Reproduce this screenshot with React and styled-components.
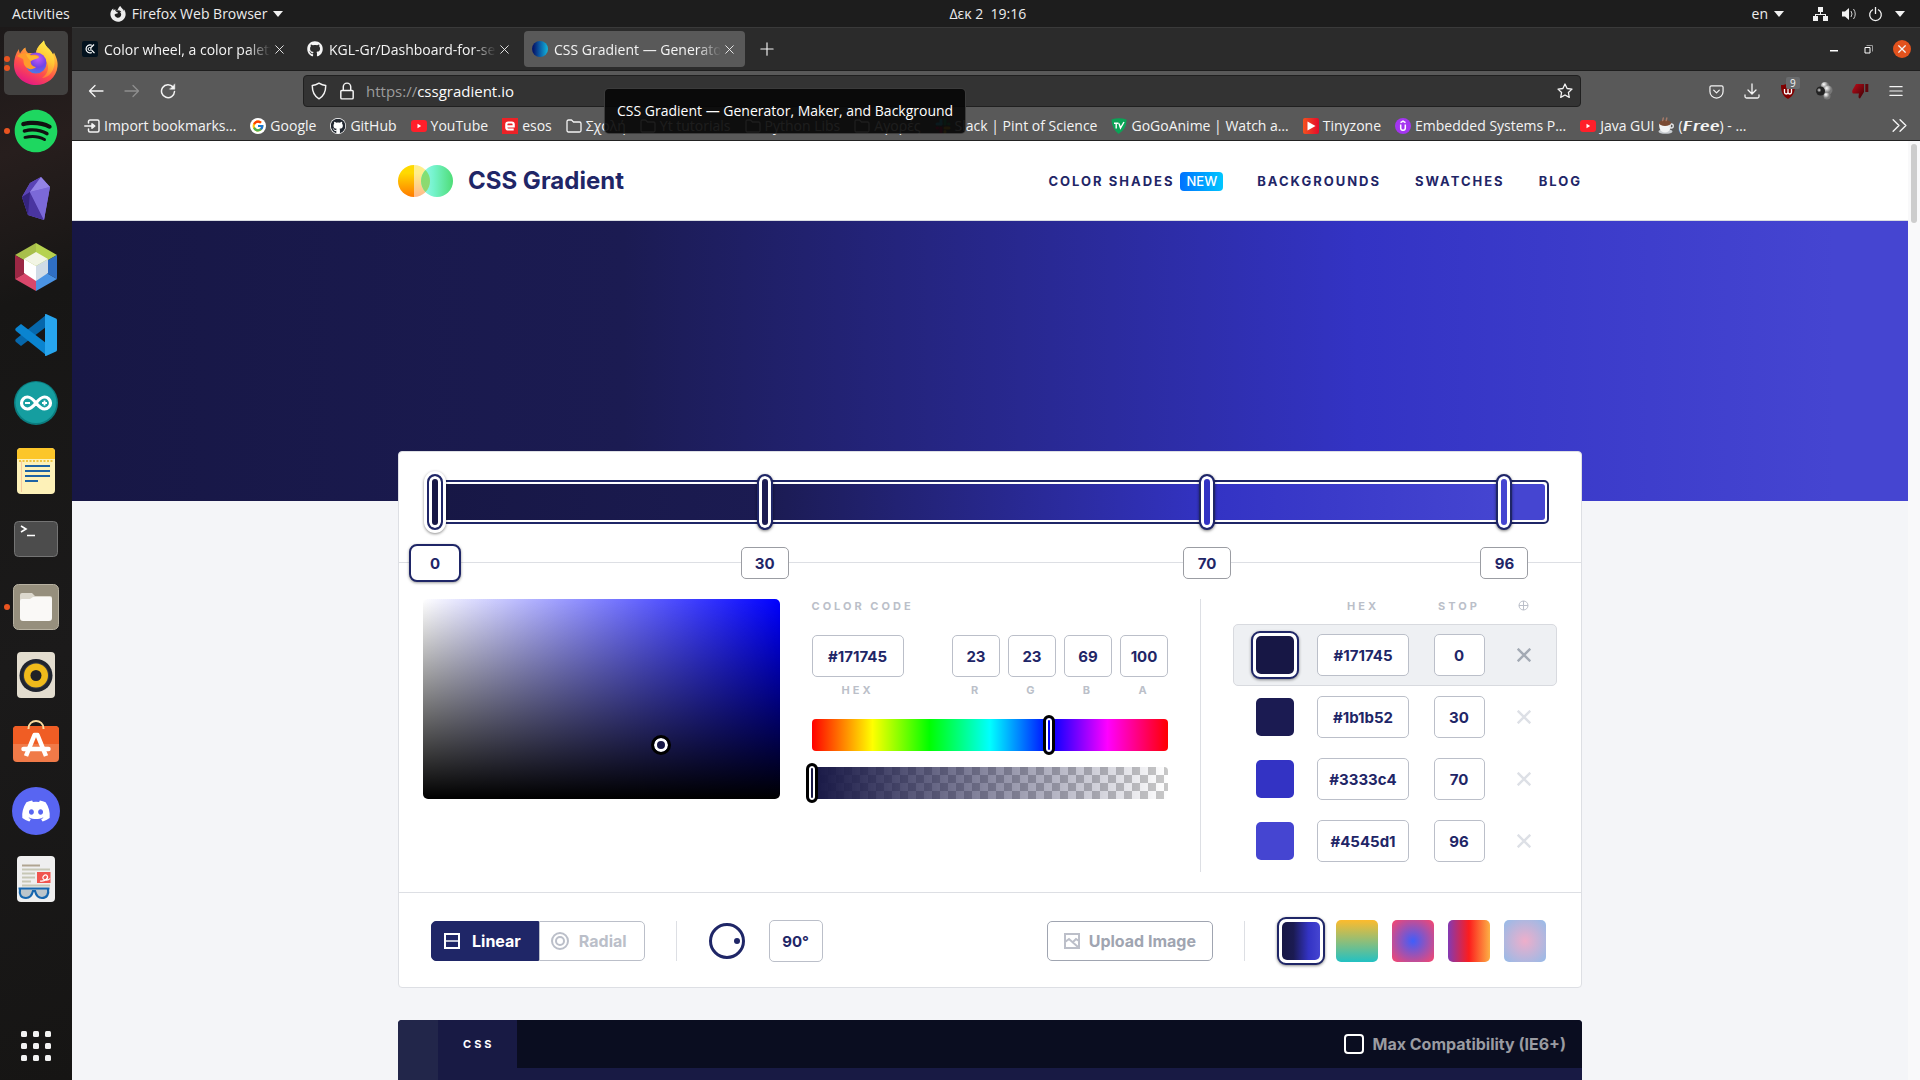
import React from "react";
import styled, { createGlobalStyle, css } from "styled-components";
import { FcGoogle } from "react-icons/fc";
import { FaGithub, FaSpotify, FaDiscord, FaFirefoxBrowser } from "react-icons/fa";

const uiFont = '"Open Sans", "Noto Sans", "DejaVu Sans", sans-serif';
const siteFont = 'Inter, "Liberation Sans", sans-serif';
const navy = "#1f2667";
const line = "#dddfe4";
const field = "#bbbfc9";
const mainGradient = "linear-gradient(90deg, #171745 0%, #1b1b52 30%, #3333c4 70%, #4545d1 96%)";

const Global = createGlobalStyle`
  * { box-sizing: border-box; }
  body { margin: 0; background: #171615; font-family: ${uiFont}; }
  button, input { font: inherit; color: inherit; margin: 0; }
  button { border: 0; padding: 0; background: none; }
  a { color: inherit; text-decoration: none; }
  svg { display: block; flex: none; }
`;

/* ---------- Desktop ---------- */

const Desktop = styled.div`
  height: 100vh;
  display: flex;
  flex-direction: column;
  overflow: hidden;
`;
const TopBar = styled.header`
  flex: none;
  height: 27px;
  display: grid;
  grid-template-columns: calc(50% - 3px) 1fr auto;
  align-items: center;
  padding-right: 15px;
  background: #1d1d1d;
  color: #ececec;
  font-size: 14px;
`;
const BarGroup = styled.div`
  display: flex;
  align-items: center;
  gap: ${(p) => p.$gap}px;
`;
const BarItem = styled.button`
  display: flex;
  align-items: center;
  gap: 6px;
  white-space: pre;
`;
const LeftBar = styled(BarGroup)`
  padding-left: 12px;
`;
const Caret = () => (
  <svg width="10" height="6" viewBox="0 0 10 6"><path d="M0 0h10L5 6z" fill="#f2f2f2" /></svg>
);
const Workspace = styled.div`
  flex: 1;
  min-height: 0;
  display: flex;
`;
const Dock = styled.nav`
  flex: none;
  width: 72px;
  display: flex;
  flex-direction: column;
  align-items: center;
  gap: 4px;
  padding: 4px 0 2px;
  background: linear-gradient(160deg, #1c1919 0%, #271e1d 12%, #171615 26%, #1b1a1a 60%, #161514 100%);
`;
const DockButton = styled.button`
  position: relative;
  width: 64px;
  height: 64px;
  display: flex;
  align-items: center;
  justify-content: center;
  border-radius: 5px;
  background: ${(p) => (p.$active ? "#424140" : "none")};
  &:last-child { margin-top: auto; }
`;
const Dots = styled.span`
  position: absolute;
  left: 0;
  display: flex;
  flex-direction: column;
  gap: 3px;
  i { width: 6px; height: 6px; border-radius: 50%; background: #e95420; }
`;

/* ---------- Browser ---------- */

const Browser = styled.main`
  flex: 1;
  min-width: 0;
  display: flex;
  flex-direction: column;
  background: #595959;
  color: #f4f4f4;
  font-size: 14px;
`;
const TabBar = styled.div`
  flex: none;
  height: 44px;
  display: flex;
  align-items: center;
  gap: 4px;
  padding: 0 9px 0 2px;
  border-top: 1px solid #3a3a3a;
  border-bottom: 1px solid #1e1e1e;
  background: #2b2b2b;
`;
const Tab = styled.div`
  width: 221px;
  height: 36px;
  display: flex;
  align-items: center;
  gap: 6px;
  padding: 0 10px 0 8px;
  border-radius: 4px;
  background: ${(p) => (p.$active ? "#595959" : "none")};
`;
const TabTitle = styled.span`
  flex: 1;
  margin-right: -4px;
  overflow: hidden;
  white-space: nowrap;
  mask-image: linear-gradient(90deg, #000 calc(100% - 24px), transparent);
`;
const PlainButton = styled.button`
  display: flex;
  align-items: center;
  justify-content: center;
  width: ${(p) => p.$w || 36}px;
  height: ${(p) => p.$h || 32}px;
`;
const WindowButtons = styled.div`
  margin-left: auto;
  display: flex;
  align-items: center;
  gap: 16px;
`;
const CloseWindow = styled(PlainButton)`
  border-radius: 50%;
  background: #e2521d;
`;
const Toolbar = styled.div`
  flex: none;
  height: 40px;
  display: flex;
  align-items: center;
  padding: 0 6px;
`;
const AddressBar = styled.label`
  flex: 1;
  height: 32px;
  display: flex;
  align-items: center;
  gap: 10px;
  margin: 0 117px 0 117px;
  padding: 0 7px 0 6px;
  border: 1px solid #202020;
  border-radius: 4px;
  background: #333;
  color: #9c9c9c;
  font-size: 15px;
`;
const Address = styled.input`
  flex: 1;
  min-width: 0;
  margin-left: -10px;
  padding: 0;
  border: 0;
  outline: 0;
  background: none;
  color: #fbfbfb;
`;
const BadgeButton = styled(PlainButton)`
  position: relative;
`;
const Count = styled.span`
  position: absolute;
  top: 2px;
  left: 16px;
  padding: 0 4px;
  border-radius: 2px;
  background: #696b6d;
  font-size: 10px;
  line-height: 12px;
`;
const Bookmarks = styled.div`
  flex: none;
  height: 30px;
  display: flex;
  align-items: center;
  gap: 14px;
  padding: 0 12px;
  border-bottom: 1px solid #222;
  white-space: nowrap;
`;
const Bookmark = styled.a`
  display: flex;
  align-items: center;
  gap: 4px;
`;
const More = styled.button`
  margin-left: auto;
`;
const Tooltip = styled.div`
  position: absolute;
  left: 604px;
  top: 88px;
  z-index: 5;
  padding: 12px;
  border: 1px solid rgba(110, 110, 110, 0.5);
  border-radius: 5px;
  background: rgba(5, 5, 5, 0.9);
  color: #fff;
  font-size: 14px;
  line-height: 20px;
`;

/* ---------- Site ---------- */

const Viewport = styled.div`
  flex: 1;
  min-height: 0;
  display: flex;
  background: #f4f5f8;
  color: ${navy};
  font-family: ${siteFont};
`;
const Site = styled.div`
  flex: 1;
  min-width: 0;
  display: flex;
  flex-direction: column;
  overflow: hidden;
`;
const ScrollTrack = styled.div`
  width: 12px;
  padding: 3px;
  background: #f9f9fa;
`;
const ScrollThumb = styled.div`
  height: 79px;
  border-radius: 3px;
  background: #cdcdcd;
`;
const Container = styled.div`
  width: 100%;
  max-width: 1184px;
  margin: 0 auto;
`;
const SiteHeader = styled.header`
  flex: none;
  border-bottom: 1px solid #d9dce2;
  background: #fff;
`;
const HeaderRow = styled(Container)`
  height: 79px;
  display: flex;
  align-items: center;
  justify-content: space-between;
`;
const Brand = styled.a`
  display: flex;
  align-items: center;
  gap: 15px;
  font-size: 24px;
  font-weight: 700;
`;
const SiteNav = styled.nav`
  display: flex;
  align-items: center;
  gap: 34px;
  padding-top: 1px;
  font-size: 13px;
  font-weight: 700;
  letter-spacing: 2px;
`;
const NavLink = styled.a`
  display: flex;
  align-items: center;
  gap: 6px;
`;
const NewBadge = styled.span`
  padding: 0 6px;
  border-radius: 4px;
  background: linear-gradient(90deg, #0072ff, #00c6ff);
  color: #fff;
  font-weight: 500;
  line-height: 19px;
  letter-spacing: 0;
`;
const Hero = styled.div`
  flex: none;
  height: 280px;
  background: ${mainGradient};
`;
const Card = styled(Container)`
  flex: none;
  margin-top: -50px;
  border: 1px solid ${line};
  border-radius: 4px;
  background: #fff;
`;
const RailSection = styled.section`
  padding: 28px 32px 0;
  border-bottom: 1px solid ${line};
`;
const Rail = styled.div`
  position: relative;
  height: 44px;
  margin-bottom: 38px;
  padding: 2px;
  border: 2px solid ${navy};
  border-radius: 5px;
`;
const RailFill = styled.div`
  height: 36px;
  border-radius: 3px;
  background: ${mainGradient};
`;
const StopRange = styled.input`
  position: absolute;
  top: -8px;
  left: -6px;
  width: calc(100% + 16px);
  height: 56px;
  appearance: none;
  background: none;
  pointer-events: none;
  &::-webkit-slider-thumb {
    appearance: none;
    pointer-events: auto;
    width: 16px;
    height: 56px;
    border: 2px solid ${navy};
    border-radius: 8px;
    background: ${(p) => p.$color};
    box-shadow: inset 0 0 0 3px #fff,
      ${(p) => (p.$active ? "0 0 0 3px #fff, 0 1px 3px 3px rgba(0,0,0,0.45)" : "0 1px 3px rgba(0,0,0,0.5)")};
  }
`;
const StopLabels = styled.div`
  position: relative;
  height: 0;
`;
const fieldStyle = css`
  border: 1px solid ${field};
  border-radius: 5px;
  outline: 0;
  padding: 0;
  background: #fff;
  color: ${navy};
  font-size: 15px;
  font-weight: 700;
  text-align: center;
`;
const StopLabel = styled.input`
  ${fieldStyle}
  position: absolute;
  top: 1px;
  transform: translate(-50%, -50%);
  width: 48px;
  height: 32px;
  border-color: #9b9da3;
  ${(p) => p.$active && css`
    width: 52px;
    height: 38px;
    border: 2px solid ${navy};
    border-radius: 8px;
    box-shadow: 0 1px 3px rgba(0, 0, 0, 0.4);
  `}
`;
const Editor = styled.section`
  display: grid;
  grid-template-columns: 1fr 1fr 357px;
  gap: 32px;
  padding: 36px 24px 20px;
  border-bottom: 1px solid ${line};
`;
const Picker = styled.div`
  position: relative;
  height: 200px;
  border-radius: 5px;
  background: linear-gradient(0deg, #000, transparent), linear-gradient(90deg, #fff, #00f);
`;
const PickerKnob = styled.button`
  position: absolute;
  width: 20px;
  height: 20px;
  transform: translate(-50%, -50%);
  border: 3px solid #000;
  border-radius: 50%;
  background: #171745;
  box-shadow: inset 0 0 0 3px #fff;
`;
const captionStyle = css`
  color: ${field};
  font-size: 11px;
  font-weight: 700;
  line-height: 14px;
  letter-spacing: 3px;
`;
const Caption = styled.h2`
  ${captionStyle}
  margin: 0 0 22px;
`;
const Fields = styled.div`
  display: flex;
  gap: 8px;
  margin-bottom: 22px;
`;
const FieldLabel = styled.label`
  ${captionStyle}
  display: flex;
  flex-direction: column;
  align-items: center;
  gap: 6px;
  &:first-child { margin-right: auto; }
`;
const Field = styled.input`
  ${fieldStyle}
  width: ${(p) => p.$w}px;
  height: 42px;
  letter-spacing: 0;
`;
const Track = styled.div`
  display: flex;
  height: 32px;
  margin-bottom: 16px;
  border-radius: 4px;
  background: ${(p) => p.$fill};
`;
const TrackRange = styled.input`
  flex: none;
  width: calc(100% + 12px);
  height: 40px;
  margin: -4px -6px;
  appearance: none;
  background: none;
  &::-webkit-slider-thumb {
    appearance: none;
    width: 12px;
    height: 40px;
    border: 3px solid #000;
    border-radius: 6px;
    background: ${(p) => p.$color};
    box-shadow: inset 0 0 0 2px #fff;
  }
`;
const StopsPane = styled.div`
  padding-left: 32px;
  border-left: 1px solid ${line};
`;
const StopsTable = styled.table`
  display: block;
  thead, tbody { display: block; }
`;
const StopRow = styled.tr`
  display: grid;
  grid-template-columns: 48px 128px 64px 65px;
  align-items: center;
  justify-items: center;
  height: ${(p) => (p.$head ? 25 : 62)}px;
  padding-left: 17px;
  border: ${(p) => (p.$head ? "0 solid" : "1px solid")};
  border-left-width: 1px;
  border-color: ${(p) => (p.$active ? "#d8dadf" : "transparent")};
  border-radius: 5px;
  background: ${(p) => (p.$active ? "#eef0f3" : "none")};
  th { ${captionStyle} align-self: start; padding: 0; }
  td { display: flex; padding: 0; }
`;
const Swatch = styled.button`
  width: ${(p) => p.$size}px;
  height: ${(p) => p.$size}px;
  border-radius: 5px;
  background: ${(p) => p.$fill};
  ${(p) => p.$active && css`
    width: 48px;
    height: 48px;
    padding: 3px;
    border: 2px solid ${navy};
    border-radius: 9px;
    box-shadow: 0 1px 3px rgba(0, 0, 0, 0.45);
  `}
`;
const SwatchCore = styled.span`
  display: block;
  height: 100%;
  border-radius: 5px;
  background: ${(p) => p.$fill};
`;
const Remove = styled(PlainButton)`
  color: ${(p) => (p.$active ? "#a3aab4" : "#dde0e6")};
`;
const Controls = styled.section`
  display: flex;
  align-items: center;
  padding: 24px 32px 22px;
`;
const ModeButton = styled.button`
  height: 40px;
  display: flex;
  align-items: center;
  gap: ${(p) => (p.$on ? 12 : 10)}px;
  padding: 0 17px 0 ${(p) => (p.$on ? 12 : 11)}px;
  border: 1px solid ${(p) => (p.$on ? navy : field)};
  border-radius: ${(p) => (p.$on ? "5px 0 0 5px" : "0 5px 5px 0")};
  background: ${(p) => (p.$on ? navy : "#fff")};
  color: ${(p) => (p.$on ? "#fff" : field)};
  font-size: 16px;
  font-weight: 700;
`;
const Rule = styled.span`
  width: 1px;
  height: 40px;
  margin: 0 32px 0 31px;
  background: ${line};
`;
const Dial = styled.button`
  width: 36px;
  height: 36px;
  display: flex;
  align-items: center;
  justify-content: flex-end;
  margin-right: 24px;
  padding-right: 2px;
  border: 3px solid ${navy};
  border-radius: 50%;
  &::after { content: ""; width: 6px; height: 6px; border-radius: 50%; background: ${navy}; }
`;
const Upload = styled.button`
  height: 40px;
  display: flex;
  align-items: center;
  gap: 9px;
  margin-left: auto;
  padding: 0 16px;
  border: 1px solid #a0a5b1;
  border-radius: 5px;
  color: #a0a5b1;
  font-size: 16px;
  font-weight: 700;
`;
const Presets = styled.div`
  display: flex;
  gap: 8px;
`;
const PresetCell = styled.div`
  width: 48px;
  height: 48px;
  display: flex;
  align-items: center;
  justify-content: center;
`;
const CodePanel = styled(Container)`
  flex: 1;
  display: flex;
  margin-top: 32px;
  border-radius: 4px 4px 0 0;
  overflow: hidden;
  background: #181a44;
`;
const Gutter = styled.div`
  width: 40px;
  background: #22264a;
`;
const CodeHeader = styled.div`
  flex: 1;
  height: 48px;
  display: flex;
  align-items: center;
  justify-content: space-between;
  padding-right: 16px;
  background: #0a0d20;
`;
const CodeTab = styled.button`
  height: 48px;
  padding: 0 22px 0 25px;
  background: #181a44;
  color: #fff;
  font-size: 11px;
  font-weight: 700;
  letter-spacing: 3px;
`;
const Compat = styled.label`
  display: flex;
  align-items: center;
  gap: 9px;
  color: #9a9ba1;
  font-size: 16px;
  font-weight: 700;
`;
const CheckBox = styled.input`
  appearance: none;
  width: 20px;
  height: 20px;
  border: 2px solid #fff;
  border-radius: 4px;
`;

/* ---------- Drawings ---------- */

const Cross = ({ size = 9, w = 1 }) => (
  <svg width={size} height={size} viewBox="0 0 10 10" stroke="currentColor" strokeWidth={w}><path d="M.5.5l9 9m0-9l-9 9" /></svg>
);
const Stroke = ({ size = 16, children, w = 1.3, color = "#f4f4f4" }) => (
  <svg width={size} height={size} viewBox="0 0 16 16" fill="none" stroke={color} strokeWidth={w} strokeLinecap="round" strokeLinejoin="round">{children}</svg>
);
const Folder = () => (
  <Stroke><path d="M1 3.500c0-.8.6-1.500 1.500-1.500h3l2 2h6c.8 0 1.500.6 1.500 1.500v7c0 .8-.7 1.500-1.500 1.500h-11c-.9 0-1.500-.7-1.500-1.500z" /></Stroke>
);
const ImportIcon = () => (
  <Stroke w={1.5}><path d="M4.500 5V3.500C4.500 2.700 5.200 2 6 2h7.500c.8 0 1.500.7 1.500 1.500v9c0 .8-.7 1.500-1.500 1.500H6c-.8 0-1.500-.7-1.500-1.500V11M.8 8H8" /><path d="M8 5.800L10.800 8 8 10.200z" fill="#f4f4f4" /></Stroke>
);
const Youtube = () => (
  <svg width="16" height="16" viewBox="0 0 16 16"><rect y="2" width="16" height="12" rx="3" fill="#ff1f2a" /><path d="M6.500 5.800v4.400L10.200 8z" fill="#fff" /></svg>
);
const Esos = () => (
  <svg width="16" height="16" viewBox="0 0 16 16"><path fill="#ec2227" d="M0 0h16v16H0z" /><path d="M4.200 8.300h7.500V6.500c0-1.300-.8-2-2-2H6.300c-1.300 0-2 .7-2 2v3c0 1.300.7 2 2 2h5.400" fill="none" stroke="#fff" strokeWidth="2.200" /></svg>
);
const Slack = () => (
  <svg width="16" height="16" viewBox="0 0 16 16" strokeWidth="3" strokeLinecap="round">
    <path d="M6 2v4" stroke="#36c5f0" /><path d="M2 6h4" stroke="#36c5f0" /><path d="M10 2v4" stroke="#2eb67d" /><path d="M13.500 6h.5" stroke="#2eb67d" />
    <path d="M10 10h4" stroke="#ecb22e" /><path d="M10 13.500v.5" stroke="#ecb22e" /><path d="M6 10v4" stroke="#e01e5a" /><path d="M2 10h.5" stroke="#e01e5a" />
  </svg>
);
const Gogo = () => (
  <svg width="16" height="16" viewBox="0 0 16 16"><path d="M.5 1.500Q8-.8 15.500 1.500 16 11 7.500 16 .8 10.500.5 1.500z" fill="#0aa457" /><path d="M3 5.200h4.500M5.200 5.200v5.300M8 5.500l1.500 4.500 3.500-6" fill="none" stroke="#fff" strokeWidth="1.400" /></svg>
);
const Tiny = () => (
  <svg width="16" height="16" viewBox="0 0 16 16"><defs><linearGradient id="tz"><stop stopColor="#f4511e" /><stop offset="1" stopColor="#e50b2b" /></linearGradient></defs><rect width="16" height="16" rx="2" fill="url(#tz)" /><path d="M4.500 3.500v9L12.500 8z" fill="#fff" /></svg>
);
const Udemy = () => (
  <svg width="16" height="16" viewBox="0 0 16 16"><circle cx="8" cy="8" r="8" fill="#a435f0" /><path d="M5.500 4.700L8 3.200l2.500 1.500M5.700 6.500v3.400c0 1.400.9 2.300 2.300 2.300s2.300-.9 2.300-2.300V6.500" fill="none" stroke="#fff" strokeWidth="1.500" /></svg>
);
const Cup = () => (
  <svg width="16" height="17" viewBox="0 0 16 17"><ellipse cx="7.500" cy="14.500" rx="7" ry="2.300" fill="#c8ccd0" /><path d="M1 6.500h12c0 5-1.500 9-6 9s-6-4-6-9z" fill="#f1f2f3" /><circle cx="13.300" cy="9" r="2" fill="none" stroke="#e4e6e8" strokeWidth="1.300" /><ellipse cx="7" cy="6" rx="6" ry="3" fill="#7a4a33" /><path d="M5 4c-1-1 1-2 0-3.500M8.500 4c-1-1 1-2 0-3.500" stroke="#a77b69" strokeWidth="1.500" fill="none" /></svg>
);
const HashIcon = () => (
  <svg width="16" height="16" viewBox="0 0 16 16"><rect width="16" height="16" rx="2" fill="#03121e" /><path d="M12 3.500L8.500 7M9.500 9l3 3.200M9.800 4.300a4 4 0 100 7.200" fill="none" stroke="#fff" strokeWidth="1.200" /><circle cx="7.600" cy="8" r="1.500" fill="none" stroke="#fff" /></svg>
);
const GradientDot = () => (
  <svg width="16" height="16" viewBox="0 0 16 16"><defs><linearGradient id="gd"><stop offset=".1" stopColor="#061a6c" /><stop offset=".45" stopColor="#0a55a0" /><stop offset="1" stopColor="#12b6dc" /></linearGradient></defs><circle cx="8" cy="8" r="8" fill="url(#gd)" /></svg>
);
const GithubFavicon = () => (
  <svg width="16" height="16" viewBox="0 0 16 16"><circle cx="8" cy="8" r="8" fill="#fff" /><g transform="translate(.6 .6)"><FaGithub size={15} color="#222831" /></g></svg>
);
const GoogleFavicon = () => (
  <svg width="16" height="16" viewBox="0 0 16 16"><circle cx="8" cy="8" r="8" fill="#fff" /><g transform="translate(1.500 1.500)"><FcGoogle size={13} /></g></svg>
);
const Logo = () => (
  <svg width="55" height="32" viewBox="0 0 55 32">
    <defs>
      <linearGradient id="lo" x1="0" y1="0" x2="0" y2="1"><stop offset=".25" stopColor="#ffd900" /><stop offset="1" stopColor="#ff7a00" /></linearGradient>
      <linearGradient id="lp" x1="0" y1="0" x2="0" y2="1"><stop offset=".25" stopColor="#ffee8c" /><stop offset="1" stopColor="#ffb98a" /></linearGradient>
      <linearGradient id="lg"><stop stopColor="#9af8f0" /><stop offset=".4" stopColor="#74f3cb" /><stop offset="1" stopColor="#4fdd77" /></linearGradient>
      <linearGradient id="lm" x1="0" y1="0" x2="0" y2="1"><stop stopColor="#78e478" /><stop offset="1" stopColor="#9bd36a" /></linearGradient>
      <clipPath id="lc"><circle cx="16" cy="16" r="16" /></clipPath>
    </defs>
    <path d="M16 0a16 16 0 000 32z" fill="url(#lo)" /><path d="M16 0a16 16 0 010 32z" fill="url(#lp)" />
    <circle cx="39" cy="16" r="16" fill="url(#lg)" /><g clipPath="url(#lc)"><circle cx="39" cy="16" r="16" fill="url(#lm)" /></g>
  </svg>
);
const Firefox = () => (
  <svg width="48" height="48" viewBox="0 0 48 48">
    <defs>
      <linearGradient id="f1" x1=".8" y1="0" x2=".3" y2="1"><stop stopColor="#fff44f" /><stop offset=".35" stopColor="#ffa436" /><stop offset=".65" stopColor="#ff4f4a" /><stop offset="1" stopColor="#e31587" /></linearGradient>
      <radialGradient id="f2" cx=".6" cy=".3" r=".8"><stop stopColor="#c158f5" /><stop offset=".5" stopColor="#7543e5" /><stop offset="1" stopColor="#3a8ee6" /></radialGradient>
      <linearGradient id="f3" x1=".7" y1="0" x2=".4" y2="1"><stop stopColor="#fff44f" /><stop offset=".5" stopColor="#ffc735" /><stop offset="1" stopColor="#ff7139" /></linearGradient>
    </defs>
    <path d="M7 10c0 2 .4 3.300 1 4.400C10 12 11 9.500 13.500 8.500c0 2 .8 4 2.500 5.500h8c2-7 5-9 8-12.500.3 4 2.500 6 5 8.500 1.500 1.500 3 3.500 4 5.500l1-2c3 6 4 10 3.500 14C44.500 38.500 35 46 24 46S2 38 2 26c0-6 1.500-11.500 5-16z" fill="url(#f1)" />
    <path d="M24 14c1-7 5-9 8-12.500.3 4 2.500 6 5 8.500 6 6 8 16 2 24-3 4-7 5-9 5 6-4 8-11 4-17-2.500-4-6-5-10-8z" fill="url(#f3)" />
    <circle cx="24" cy="24" r="10.500" fill="url(#f2)" />
    <path d="M5 17c4-3.500 10-4 14-1 3-.6 7 0 8 1.500-2 2-6 1.700-8 4-1 3 1 6 5 6.500-3 3-8 3-11-1-2-3-1-5-2-7-2-1-4-2-6-3z" fill="#ff9a2c" />
    <path d="M14 15c3 0 4 1 5 2 3-.5 7 0 8 1.500-2 1.500-6 1.700-8 3.500-2-1.500-4-3.500-5-7z" fill="#ffb52e" />
  </svg>
);
const Obsidian = () => (
  <svg width="30" height="46" viewBox="0 0 30 46"><path d="M20 1l9 10-6 33L7 39 1 21 9 7z" fill="#7a66d4" /><path d="M20 1L9 16 1 21 9 7z" fill="#5a43b5" /><path d="M20 1l9 10-20 5z" fill="#9484e6" /><path d="M9 16l14 28L7 39 1 21z" fill="#4a35a0" /><path d="M9 16l-2 23L1 21z" fill="#35247f" /><path d="M9 16L29 11l-6 33z" fill="#7b69d8" /></svg>
);
const Netbeans = () => (
  <svg width="42" height="48" viewBox="0 0 42 48"><path d="M21 0L0 12l21 12z" fill="#a8bf4b" /><path d="M21 0l21 12-21 12z" fill="#b6d24f" /><path d="M0 12v24l21-12z" fill="#9b2744" /><path d="M0 36l21 12V24z" fill="#d9476b" /><path d="M42 12v24L21 24z" fill="#2f6fc4" /><path d="M42 36L21 48V24z" fill="#4a93e4" /><path d="M21 9l12 7-12 7-12-7z" fill="#f2f5e4" /><path d="M9 16v14l12 8V23z" fill="#fff" /><path d="M33 16v14l-12 8V23z" fill="#d0dbe6" /></svg>
);
const Vscode = () => (
  <svg width="42" height="42" viewBox="0 0 42 42"><path d="M31 1v12L6 32l-5-4c-1-1-1-2 0-3z" fill="#0667ab" /><path d="M31 41V29L6 10l-5 4c-1 1-1 2 0 3z" fill="#0a84d0" /><path d="M31 0l10 4.500c.7.300 1 1 1 2v29c0 1-.3 1.700-1 2L31 42c-1 0-1-.5-1-1V1c0-.5 0-1 1-1z" fill="#27a5ee" /></svg>
);
const Arduino = () => (
  <svg width="44" height="44" viewBox="0 0 44 44"><circle cx="22" cy="22" r="22" fill="#0b7d80" /><circle cx="22" cy="21.500" r="20.500" fill="#159ea0" /><path d="M22 22c-4-5-6-6-8.500-6a6 6 0 000 12c2.500 0 4.500-1 8.500-6s6-6 8.500-6a6 6 0 010 12c-2.500 0-4.500-1-8.500-6z" fill="none" stroke="#fff" strokeWidth="3.200" /><path d="M11 22h5M28 22h5M30.500 19.500v5" stroke="#fff" strokeWidth="1.800" /></svg>
);
const Notes = () => (
  <svg width="38" height="46" viewBox="0 0 38 46"><rect width="38" height="46" rx="4" fill="#fdf1b8" /><path d="M0 11V4a4 4 0 014-4h30a4 4 0 014 4v7z" fill="#fcc629" /><path d="M2 13h34" stroke="#f0c440" strokeWidth="2" strokeDasharray="2 1.500" /><path d="M4.500 13v31" stroke="#f6c9a0" /><path d="M8 18h25M8 23h25M8 28h25M8 33h13" stroke="#1d63a5" strokeWidth="2" /></svg>
);
const Terminal = () => (
  <svg width="44" height="36" viewBox="0 0 44 36"><rect x=".5" y=".5" width="43" height="35" rx="4" fill="#4c4c4c" stroke="#747474" /><path d="M7 5l5 3-5 3M13 14.500h8" fill="none" stroke="#fff" strokeWidth="1.600" /></svg>
);
const Files = () => (
  <svg width="46" height="46" viewBox="0 0 46 46"><rect x=".5" y=".5" width="45" height="45" rx="5" fill="#968f7d" stroke="#b7b1a1" /><path d="M7 11q0-2 2-2h10l3 3h15q2 0 2 2v10H7z" fill="#dcd8cd" /><path d="M7 17q0-2 2-2h8l3-2h17q2 0 2 2v19q0 3-3 3H10q-3 0-3-3z" fill="#faf9f7" /></svg>
);
const Speaker = () => (
  <svg width="38" height="46" viewBox="0 0 38 46"><rect width="38" height="46" rx="4" fill="#e3ddcf" /><circle cx="19" cy="23.500" r="16.500" fill="#20242e" /><circle cx="19" cy="23.500" r="13" fill="#363a46" /><circle cx="19" cy="23.500" r="12" fill="#f0ba1b" /><circle cx="19" cy="23.500" r="5.500" fill="#202226" /></svg>
);
const Software = () => (
  <svg width="46" height="46" viewBox="0 0 46 46"><rect y="6" width="46" height="36" rx="4" fill="#f07a48" /><path d="M0 10a4 4 0 014-4h38a4 4 0 014 4v14H0z" fill="#f05d24" /><path d="M15.500 9V8.500c0-10 15-10 15 0V9" fill="none" stroke="#fbdca0" strokeWidth="2" /><path d="M13 36l8.500-21h3L33 36" fill="none" stroke="#fff" strokeWidth="4.500" strokeLinejoin="round" /><path d="M10.500 29h25" stroke="#fff" strokeWidth="4.500" strokeLinecap="round" /></svg>
);
const Discord = () => (
  <svg width="48" height="48" viewBox="0 0 48 48"><circle cx="24" cy="24" r="24" fill="#5865f2" /><g transform="translate(9 9)"><FaDiscord size={30} color="#fff" /></g></svg>
);
const Reader = () => (
  <svg width="38" height="46" viewBox="0 0 38 46"><rect width="38" height="46" rx="4" fill="#efefef" /><path d="M5 9.500h18" stroke="#b0a591" strokeWidth="2" /><path d="M5 13.500h28M5 17.500h13M5 21.500h13M5 25.500h9M5 29.500h28" stroke="#c7c7b5" strokeWidth="2" /><rect x="20" y="16" width="13.500" height="11" fill="#f0544e" /><path d="M23 25c5 1 9-3 7-5.500-2-1.500-5 1-4 3s5 2.500 7 0" fill="none" stroke="#fff" strokeWidth="1.200" /><path d="M1.500 32.500h31M3 33c-1 6 1 9 6 9 4 0 6-3 7-7h2c1 4 3 7 7 7 5 0 7-4 6-9" fill="#bcc5cb" stroke="#1766ae" strokeWidth="2.200" /></svg>
);
const Apps = () => (
  <svg width="30" height="30" viewBox="0 0 30 30" fill="#f2f2f2">
    {[0, 12, 24].map((x) => [0, 12, 24].map((y) => <rect key={x + "-" + y} x={x} y={y} width="6" height="6" rx="1.500" />))}
  </svg>
);

/* ---------- Data ---------- */

const dock = [
  { name: "Firefox", icon: <Firefox />, dots: 2, active: true },
  { name: "Spotify", icon: <svg width="44" height="44" viewBox="0 0 44 44"><circle cx="22" cy="22" r="19" fill="#111" /><FaSpotify size={44} color="#1ed760" /></svg>, dots: 1 },
  { name: "Obsidian", icon: <Obsidian /> },
  { name: "NetBeans", icon: <Netbeans /> },
  { name: "Code", icon: <Vscode /> },
  { name: "Arduino", icon: <Arduino /> },
  { name: "Notes", icon: <Notes /> },
  { name: "Terminal", icon: <Terminal /> },
  { name: "Files", icon: <Files />, dots: 1 },
  { name: "Rhythmbox", icon: <Speaker /> },
  { name: "Software", icon: <Software /> },
  { name: "Discord", icon: <Discord /> },
  { name: "Document Reader", icon: <Reader /> },
  { name: "Show Applications", icon: <Apps /> },
];
const tabs = [
  { title: "Color wheel, a color palette generator", icon: <HashIcon /> },
  { title: "KGL-Gr/Dashboard-for-sensors", icon: <FaGithub size={16} /> },
  { title: "CSS Gradient — Generator, Maker", icon: <GradientDot />, active: true },
];
const bookmarks = [
  ["Import bookmarks…", <ImportIcon />],
  ["Google", <GoogleFavicon />],
  ["GitHub", <GithubFavicon />],
  ["YouTube", <Youtube />],
  ["esos", <Esos />],
  ["Σχολή", <Folder />],
  ["Yt tutorials", <Folder />],
  ["Python Libs", <Folder />],
  ["Αγορές", <Folder />],
  ["Slack | Pint of Science", <Slack />],
  ["GoGoAnime | Watch a…", <Gogo />],
  ["Tinyzone", <Tiny />],
  ["Embedded Systems P…", <Udemy />],
];
const stops = [
  { hex: "#171745", stop: 0, at: 0, active: true },
  { hex: "#1b1b52", stop: 30, at: 29.6 },
  { hex: "#3333c4", stop: 70, at: 69.3 },
  { hex: "#4545d1", stop: 96, at: 96 },
];
const presets = [
  "linear-gradient(90deg, #171745, #1b1b52 30%, #3333c4 70%, #4545d1)",
  "linear-gradient(0deg, #22c1c3, #fdbb2d)",
  "radial-gradient(circle, #3f5efb, #fc466b)",
  "linear-gradient(90deg, #833ab4, #fd1d1d 50%, #fcb045)",
  "radial-gradient(circle, #eeaeca, #94bbe9)",
];
const hueFill = "linear-gradient(90deg, #f00, #ff0 17%, #0f0 33%, #0ff 50%, #00f 67%, #f0f 83%, #f00)";
const alphaFill = "linear-gradient(90deg, #171745, rgba(255,255,255,0)), repeating-conic-gradient(#fff 0 25%, #c8c8c8 0 50%) 0 0 / 16px 16px";

export default function App() {
  return (
    <Desktop>
      <Global />
      <TopBar>
        <LeftBar $gap={40}>
          <BarItem>Activities</BarItem>
          <BarItem><FaFirefoxBrowser size={16} />Firefox Web Browser<Caret /></BarItem>
        </LeftBar>
        <BarItem>{"Δεκ 2  19:16"}</BarItem>
        <BarGroup $gap={13}>
          <BarItem>en<Caret /></BarItem>
          <BarItem aria-label="System">
            <svg width="92" height="16" viewBox="3 0 92 16" fill="#f2f2f2">
              <path d="M24 1h5v5h-5zM19 10h5v5h-5zM29 10h5v5h-5zM26 6h1v2h5v2h-1V9h-9v1h-1V8h5z" />
              <path d="M48 5.500h3L55 2v12l-4-3.500h-3z" /><path d="M57 5q2 3 0 6M59.500 3q3.500 5 0 10" fill="none" stroke="#d0d0d0" />
              <path d="M79 3.500a5.800 5.800 0 105 0M81.500 1v7" fill="none" stroke="#f2f2f2" strokeWidth="1.300" />
            </svg>
            <Caret />
          </BarItem>
        </BarGroup>
      </TopBar>
      <Workspace>
        <Dock>
          {dock.map((d) => (
            <DockButton key={d.name} $active={d.active} aria-label={d.name}>
              {d.dots && <Dots>{Array.from({ length: d.dots }, (_, i) => <i key={i} />)}</Dots>}
              {d.icon}
            </DockButton>
          ))}
        </Dock>
        <Browser>
          <TabBar>
            {tabs.map((t) => (
              <Tab key={t.title} $active={t.active}>
                {t.icon}
                <TabTitle>{t.title}</TabTitle>
                <PlainButton $w={12} aria-label="Close tab"><Cross /></PlainButton>
              </Tab>
            ))}
            <PlainButton aria-label="New tab"><Stroke size={14}><path d="M8 1v14M1 8h14" /></Stroke></PlainButton>
            <WindowButtons>
              <PlainButton $w={18} aria-label="Minimise"><svg width="8" height="6"><path d="M0 4h8v1.500H0z" fill="#fff" /></svg></PlainButton>
              <PlainButton $w={18} aria-label="Restore"><svg width="9" height="9" fill="none"><path d="M2.500.5h6v6" stroke="#999" /><path d="M1 2.500h5v5.500H1z" stroke="#fff" /></svg></PlainButton>
              <CloseWindow $w={18} $h={18} aria-label="Close window"><Cross size={8} w={1.6} /></CloseWindow>
            </WindowButtons>
          </TabBar>
          <Toolbar>
            <PlainButton aria-label="Back"><Stroke><path d="M15 8H1.500M7 2.500L1.500 8 7 13.500" /></Stroke></PlainButton>
            <PlainButton aria-label="Forward"><Stroke color="#8e8e8e"><path d="M1 8h13.500M9 2.500L14.500 8 9 13.500" /></Stroke></PlainButton>
            <PlainButton aria-label="Reload"><Stroke w={1.5}><path d="M13 4A6.500 6.500 0 1014.500 8.500" /><path d="M14.800 1.200v5H9.800z" fill="#f4f4f4" strokeWidth=".5" /></Stroke></PlainButton>
            <AddressBar>
              <Stroke size={18}><path d="M8 1c2.500 1.600 4 2 6 2.200 0 5.500-1.500 9.300-6 11.800C3.500 12.500 2 8.700 2 3.200 4 3 5.500 2.600 8 1z" /></Stroke>
              <Stroke size={18}><path d="M3.500 7.500h9c.5 0 1 .4 1 1V14c0 .6-.5 1-1 1h-9c-.6 0-1-.4-1-1V8.500c0-.6.4-1 1-1zM4.700 7.500V4.300a3.300 3.300 0 016.600 0v3.200" /></Stroke>
              <span>https://</span>
              <Address defaultValue="cssgradient.io" aria-label="Address" />
              <Stroke><path d="M8 1l2.100 4.500 4.900.6-3.600 3.400.9 4.900L8 12l-4.300 2.400.9-4.900L1 6.100l4.900-.6z" /></Stroke>
            </AddressBar>
            <PlainButton aria-label="Pocket"><Stroke size={15}><path d="M2.500 2h11c.7 0 1.500.6 1.500 1.500V8c0 4-3 7-7 7S1 12 1 8V3.500C1 2.600 1.700 2 2.500 2zM5 6.500l3 3 3-3" /></Stroke></PlainButton>
            <PlainButton aria-label="Downloads"><Stroke><path d="M8 1v9.500M4 7l4 4 4-4M1 12v1.500c0 .8.7 1.500 1.500 1.500h11c.8 0 1.500-.7 1.500-1.500V12" /></Stroke></PlainButton>
            <BadgeButton aria-label="uBlock">
              <svg width="16" height="16" viewBox="0 0 16 16"><path d="M8 0c2 1.500 4 2 7 2 0 6.500-1.500 11-7 14C2.500 13 1 8.500 1 2c3 0 5-.5 7-2z" fill="#800000" /><path d="M4.500 6v3.200c0 2.400 3.500 2.400 3.500 0V6m0 3.200c0 2.400 3.500 2.400 3.500 0V6" fill="none" stroke="#fff" strokeWidth="1.300" /></svg>
              <Count>9</Count>
            </BadgeButton>
            <PlainButton aria-label="Extension">
              <svg width="18" height="18" viewBox="0 0 18 18"><defs><radialGradient id="b1" cx=".35" cy=".3"><stop stopColor="#fff" /><stop offset="1" stopColor="#777" /></radialGradient><radialGradient id="b2" cx=".35" cy=".4"><stop stopColor="#ddd" /><stop offset=".5" stopColor="#222" /></radialGradient></defs><circle cx="10" cy="4" r="4" fill="url(#b1)" /><circle cx="13" cy="8" r="4.500" fill="url(#b1)" /><circle cx="12" cy="14" r="3.500" fill="url(#b1)" /><circle cx="5.500" cy="9" r="4.500" fill="url(#b2)" /></svg>
            </PlainButton>
            <PlainButton aria-label="Dislikes">
              <svg width="17" height="16" viewBox="0 0 17 16"><defs><linearGradient id="dl" y2="1"><stop stopColor="#c00a18" /><stop offset="1" stopColor="#3a0206" /></linearGradient></defs><path d="M4 1h8v8l-4 6.500c-2 0-1.500-3-1-5H1.500C0 10.500 0 8.500.5 7z" fill="url(#dl)" /><path d="M13.300 1h3v8h-3z" fill="#5f060c" /></svg>
            </PlainButton>
            <PlainButton aria-label="Menu"><Stroke size={14}><path d="M1 3h14M1 8h14M1 13h14" /></Stroke></PlainButton>
          </Toolbar>
          <Bookmarks>
            {bookmarks.map(([name, icon]) => <Bookmark key={name} href="#">{icon}{name}</Bookmark>)}
            <Bookmark href="#"><Youtube />Java GUI<Cup />(𝙁𝙧𝙚𝙚) - …</Bookmark>
            <More aria-label="More bookmarks"><Stroke size={17}><path d="M2 2.500L7.500 8 2 13.500M8.500 2.500L14 8l-5.500 5.500" /></Stroke></More>
          </Bookmarks>
          <Viewport>
            <Site>
              <SiteHeader>
                <HeaderRow>
                  <Brand href="#"><Logo />CSS Gradient</Brand>
                  <SiteNav>
                    <NavLink href="#">COLOR SHADES<NewBadge>NEW</NewBadge></NavLink>
                    <NavLink href="#">BACKGROUNDS</NavLink>
                    <NavLink href="#">SWATCHES</NavLink>
                    <NavLink href="#">BLOG</NavLink>
                  </SiteNav>
                </HeaderRow>
              </SiteHeader>
              <Hero />
              <Card>
                <RailSection>
                  <Rail>
                    <RailFill />
                    {stops.map((s) => (
                      <StopRange key={s.hex} type="range" min="0" max="100" step="any" defaultValue={s.at} $color={s.hex} $active={s.active} aria-label={`Stop ${s.hex}`} />
                    ))}
                  </Rail>
                  <StopLabels>
                    {stops.map((s) => (
                      <StopLabel key={s.hex} defaultValue={s.stop} $active={s.active} aria-label={`Position of ${s.hex}`} style={{ left: `calc(4px + (100% - 4px) * ${s.at / 100})` }} />
                    ))}
                  </StopLabels>
                </RailSection>
                <Editor>
                  <Picker><PickerKnob aria-label="Saturation and brightness" style={{ left: "66.7%", top: "73%" }} /></Picker>
                  <div>
                    <Caption>COLOR CODE</Caption>
                    <Fields>
                      <FieldLabel><Field $w={92} defaultValue="#171745" />HEX</FieldLabel>
                      {[["R", 23], ["G", 23], ["B", 69], ["A", 100]].map(([k, v]) => (
                        <FieldLabel key={k}><Field $w={48} defaultValue={v} />{k}</FieldLabel>
                      ))}
                    </Fields>
                    <Track $fill={hueFill}><TrackRange type="range" min="0" max="360" defaultValue="240" $color="#00f" aria-label="Hue" /></Track>
                    <Track $fill={alphaFill}><TrackRange type="range" min="0" max="100" defaultValue="0" $color="#171745" aria-label="Transparency" /></Track>
                  </div>
                  <StopsPane>
                    <StopsTable cellSpacing="0">
                      <thead>
                        <StopRow $head>
                          <th />
                          <th>HEX</th>
                          <th>STOP</th>
                          <th><svg width="11" height="14" viewBox="0 0 11 14" fill="none" stroke={field}><circle cx="5.500" cy="6.500" r="4.500" /><path d="M5.500 2v9M1 6.500h9" /></svg></th>
                        </StopRow>
                      </thead>
                      <tbody>
                        {stops.map((s) => (
                          <StopRow key={s.hex} $active={s.active}>
                            <td>
                              {s.active
                                ? <Swatch $size={38} $fill="#fff" $active aria-label={s.hex}><SwatchCore $fill={s.hex} /></Swatch>
                                : <Swatch $size={38} $fill={s.hex} aria-label={s.hex} />}
                            </td>
                            <td><Field $w={92} defaultValue={s.hex} aria-label="Hex" /></td>
                            <td><Field $w={51} defaultValue={s.stop} aria-label="Stop" /></td>
                            <td><Remove $w={24} $h={24} $active={s.active} aria-label="Remove stop"><Cross size={14} w={1.7} /></Remove></td>
                          </StopRow>
                        ))}
                      </tbody>
                    </StopsTable>
                  </StopsPane>
                </Editor>
                <Controls>
                  <ModeButton $on>
                    <svg width="16" height="16" fill="none"><path d="M1 1h14v14H1z" stroke="#fff" strokeWidth="2" /><path d="M2 8h12" stroke="#bfc2d4" strokeWidth="2" /></svg>
                    Linear
                  </ModeButton>
                  <ModeButton>
                    <svg width="18" height="18" fill="none" stroke={field} strokeWidth="2"><circle cx="9" cy="9" r="8" /><circle cx="9" cy="9" r="4" /></svg>
                    Radial
                  </ModeButton>
                  <Rule />
                  <Dial aria-label="Angle" />
                  <Field $w={54} defaultValue="90°" aria-label="Angle value" />
                  <Upload>
                    <svg width="16" height="16" fill="none" stroke="#bcbfc9" strokeWidth="2"><path d="M1 1h14v14H1zM1 9l4-3 9 8M9 9l3-3 3 2" /></svg>
                    Upload Image
                  </Upload>
                  <Rule />
                  <Presets>
                    {presets.map((p, i) => (
                      <PresetCell key={p}>
                        {i === 0
                          ? <Swatch $size={42} $fill="#fff" $active aria-label="Preset"><SwatchCore $fill={p} /></Swatch>
                          : <Swatch $size={42} $fill={p} aria-label="Preset" />}
                      </PresetCell>
                    ))}
                  </Presets>
                </Controls>
              </Card>
              <CodePanel>
                <Gutter />
                <CodeHeader>
                  <CodeTab>CSS</CodeTab>
                  <Compat><CheckBox type="checkbox" />Max Compatibility (IE6+)</Compat>
                </CodeHeader>
              </CodePanel>
            </Site>
            <ScrollTrack><ScrollThumb /></ScrollTrack>
          </Viewport>
        </Browser>
      </Workspace>
      <Tooltip role="tooltip">CSS Gradient — Generator, Maker, and Background</Tooltip>
    </Desktop>
  );
}
